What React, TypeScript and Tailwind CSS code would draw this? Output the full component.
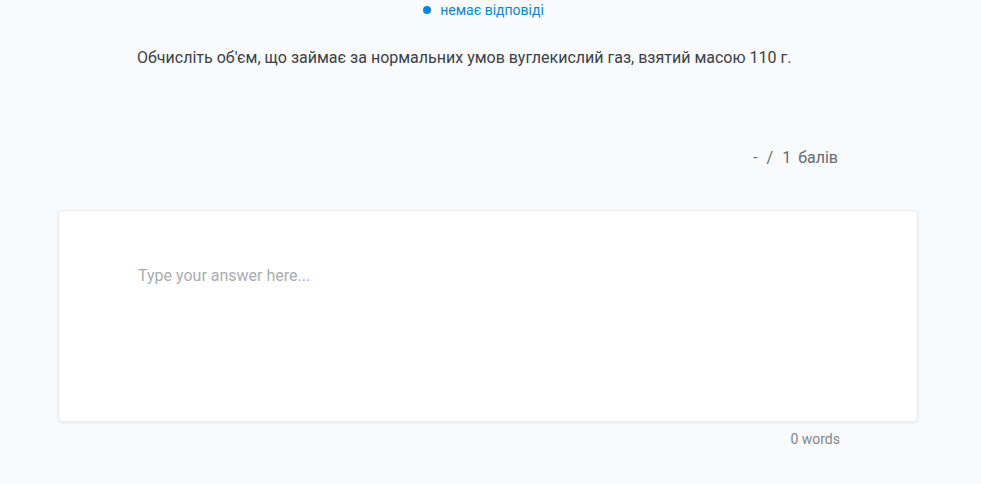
import { useState } from 'react';

const App = () => {
  const [answer, setAnswer] = useState('');
  const words = answer.trim() ? answer.trim().split(/\s+/).length : 0;

  return (
    <div className="min-h-screen w-full bg-[#f9fafc] font-['Roboto','Liberation_Sans',sans-serif] text-[#394047]">
      <div className="flex items-center justify-center gap-[9px] pr-[14px] pt-[1px] h-[19px]">
        <span className="w-[8px] h-[8px] rounded-full bg-[#0a86d8]" />
        <span className="text-[14px] text-[#0a86d8]">немає відповіді</span>
      </div>

      <div className="px-[137px] pt-[28px]">
        <p className="text-[16px] leading-[22px]">
          Обчисліть об'єм, що займає за нормальних умов вуглекислий газ, взятий масою 110 г.
        </p>
      </div>

      <div className="flex justify-end pr-[143px] pt-[78px] text-[16px] text-[#646b72] leading-[22px]">
        <span>-</span>
        <span className="ml-[9px]">/</span>
        <span className="ml-[9px]">1</span>
        <span className="ml-[7px]">балів</span>
      </div>

      <div className="px-[58px] pt-[41px] w-[976px]">
        <div className="bg-white border border-[#ececef] rounded-[3px] shadow-[0_1px_3px_rgba(0,0,0,0.08)] h-[212px] px-[79px] pt-[55px]">
          <textarea
            value={answer}
            onChange={(e) => setAnswer(e.target.value)}
            placeholder="Type your answer here..."
            className="w-full h-[120px] resize-none outline-none text-[16px] leading-[20px] text-[#394047] placeholder:text-[#a9adb2] bg-transparent"
          />
        </div>
        <div className="flex justify-end pr-[78px] pt-[8px] text-[14px] text-[#80868c] leading-[18px]">
          {words} words
        </div>
      </div>
    </div>
  );
};

export default App;
